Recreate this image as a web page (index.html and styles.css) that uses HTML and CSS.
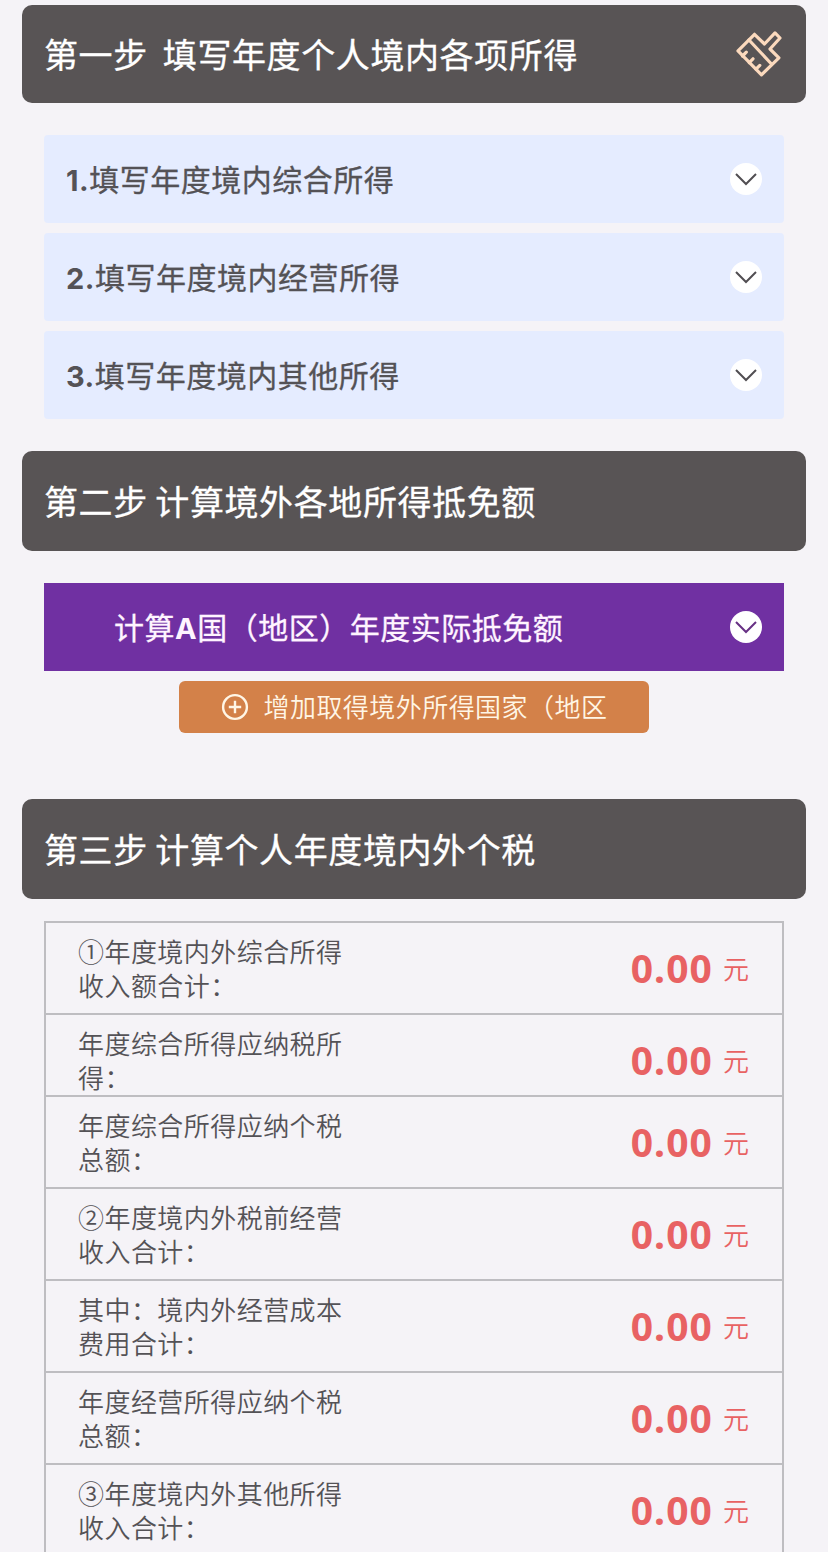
FILE: index.html
```html
<!DOCTYPE html>
<html lang="zh-CN">
<head>
<meta charset="utf-8">
<title>年度个税计算</title>
<link rel="stylesheet" href="styles.css">
</head>
<body>
<main class="page">
  <header class="step step-first">
    <h2 class="step-title"><span>第一步</span><span class="wide-gap">填写年度个人境内各项所得</span></h2>
    <svg class="brush" viewBox="0 0 48 48" fill="none" stroke="#fbd9bd" stroke-width="3.2" stroke-linejoin="round">
      <path d="M19.5 5.3 29.5 15 40 3.9 45 9 35 20 43.9 28.8 26.5 45.8 3 21.9Z"/>
      <path d="M14 11 36 34.5M7.5 27 11.3 23.2M14.2 33.6 18 29.8M21 40.2 24.8 36.4" stroke-linecap="round"/>
    </svg>
  </header>
  <section class="items">
    <div class="item"><span class="text"><b>1.</b>填写年度境内综合所得</span><span class="toggle"><svg viewBox="0 0 32 32"><path d="M6 11 16 21 26 11"/></svg></span></div>
    <div class="item"><span class="text"><b>2.</b>填写年度境内经营所得</span><span class="toggle"><svg viewBox="0 0 32 32"><path d="M6 11 16 21 26 11"/></svg></span></div>
    <div class="item"><span class="text"><b>3.</b>填写年度境内其他所得</span><span class="toggle"><svg viewBox="0 0 32 32"><path d="M6 11 16 21 26 11"/></svg></span></div>
  </section>
  <header class="step"><h2 class="step-title"><span>第二步</span><span class="gap">计算境外各地所得抵免额</span></h2></header>
  <section class="abroad">
    <div class="item country"><span class="text">计算<b>A</b>国（地区）年度实际抵免额</span><span class="toggle"><svg viewBox="0 0 32 32"><path d="M6 11 16 21 26 11"/></svg></span></div>
    <button class="add" type="button">
      <svg class="plus" viewBox="0 0 28 28" fill="none" stroke="#fff6e6" stroke-width="2.4"><circle cx="14" cy="14" r="11.9"/><path d="M7.8 14H20.2M14 7.8V20.2"/></svg>
      <span class="add-text">增加取得境外所得国家（地区</span>
    </button>
  </section>
  <header class="step"><h2 class="step-title"><span>第三步</span><span class="gap">计算个人年度境内外个税</span></h2></header>
  <section class="totals">
    <div class="row"><p class="label">①年度境内外综合所得<br>收入额合计：</p><p class="value"><b>0.00</b><span>元</span></p></div>
    <div class="row row-short"><p class="label">年度综合所得应纳税所<br>得：</p><p class="value"><b>0.00</b><span>元</span></p></div>
    <div class="row"><p class="label">年度综合所得应纳个税<br>总额：</p><p class="value"><b>0.00</b><span>元</span></p></div>
    <div class="row"><p class="label">②年度境内外税前经营<br>收入合计：</p><p class="value"><b>0.00</b><span>元</span></p></div>
    <div class="row"><p class="label">其中：境内外经营成本<br>费用合计：</p><p class="value"><b>0.00</b><span>元</span></p></div>
    <div class="row"><p class="label">年度经营所得应纳个税<br>总额：</p><p class="value"><b>0.00</b><span>元</span></p></div>
    <div class="row"><p class="label">③年度境内外其他所得<br>收入合计：</p><p class="value"><b>0.00</b><span>元</span></p></div>
  </section>
</main>
</body>
</html>
```

FILE: styles.css
```css
* { box-sizing: border-box; margin: 0; padding: 0; }
body {
  background: #f5f3f7;
  font-family: "Noto Sans CJK SC", sans-serif;
  color: #545256;
}
.page { height: 1552px; overflow: hidden; padding: 5px 22px 0; }
.step {
  display: flex;
  align-items: center;
  justify-content: space-between;
  height: 100px;
  padding: 0 23px 0 22px;
  border-radius: 10px;
  background: #585455;
  color: #fff;
}
.step-first { height: 98px; }
.step-title {
  font-size: 34px;
  font-weight: 400;
  -webkit-text-stroke: 0.3px;
  line-height: 50px;
  letter-spacing: 0.6px;
  white-space: nowrap;
}
.gap { margin-left: 7.5px; }
.wide-gap { margin-left: 15px; }
.brush { width: 48px; height: 48px; margin-bottom: 2px; }
.items { display: grid; gap: 10px; padding: 32px 22px; }
.item {
  display: flex;
  align-items: center;
  justify-content: space-between;
  height: 88px;
  padding: 0 22px;
  background: #e5ecff;
  border-radius: 4px;
  font-size: 30px;
  font-weight: 400;
  letter-spacing: 0.5px;
}
.text { padding-bottom: 2px; -webkit-text-stroke: 0.3px; }
.item b { font-family: Inter, sans-serif; font-weight: 700; font-size: 29px; -webkit-text-stroke: 0; }
.toggle { width: 32px; height: 32px; border-radius: 50%; background: #fff; }
.toggle svg { display: block; fill: none; stroke: #514e52; stroke-width: 2; }
.abroad { display: flex; flex-direction: column; gap: 10px; padding: 32px 22px 66px; }
.country { padding-left: 70px; border-radius: 0; background: #7030a2; color: #fff4ff; }
.country .toggle svg { stroke: #673184; }
.add {
  display: flex;
  align-items: center;
  align-self: center;
  gap: 14.5px;
  width: 470px;
  height: 52px;
  padding: 0 0 0 42px;
  border: 0;
  border-radius: 6px;
  background: #d38149;
  color: #fff6e6;
  font: 400 26px/36px "Noto Sans CJK SC", sans-serif;
  font-weight: 350;
  letter-spacing: 0.45px;
  white-space: nowrap;
}
.add-text { padding-bottom: 3px; }
.plus { width: 28px; height: 28px; }
.totals { margin: 22px 22px 0; border: 2px solid #bebdc1; border-bottom: 0; }
.row {
  display: flex;
  justify-content: space-between;
  height: 92px;
  padding: 11px 33px 0 32px;
  border-bottom: 2px solid #bebdc1;
}
.row-short { height: 82px; }
.label { font-size: 26px; line-height: 34px; letter-spacing: 0.45px; font-weight: 350; }
.value { display: flex; align-items: center; gap: 10px; height: 71px; color: #e86263; }
.value b { padding-bottom: 3px; font: 700 39px/46px "Noto Sans", sans-serif; letter-spacing: 1.1px; }
.value span { font-size: 26px; font-weight: 350; padding-bottom: 4px; }
```
